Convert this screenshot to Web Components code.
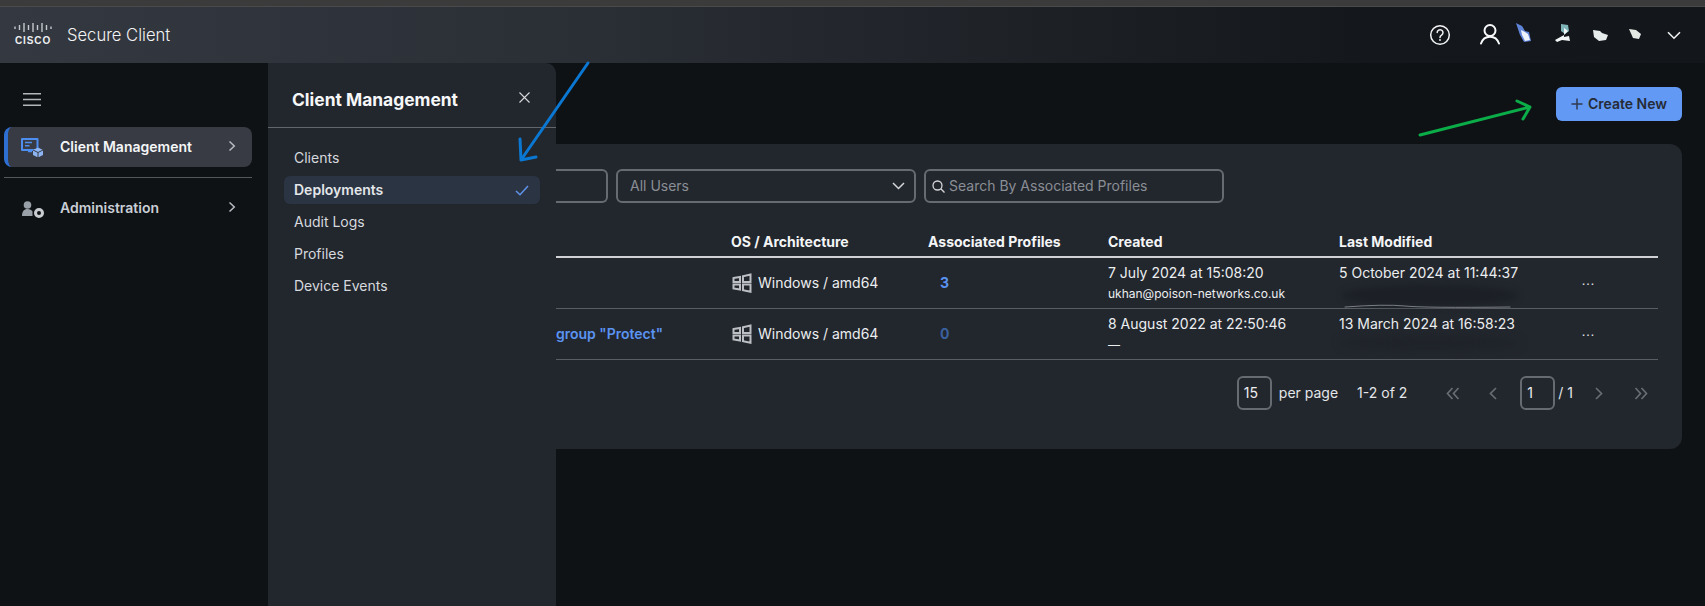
<!DOCTYPE html>
<html><head><meta charset="utf-8"><style>
html,body{margin:0;padding:0;background:#0f1215;}
body{font-family:Inter,"Liberation Sans",sans-serif;color:#fff;width:1705px;height:606px;overflow:hidden;}
</style></head><body>
<app-shell></app-shell>
<script>
function def(name,css,html){
  customElements.define(name,class extends HTMLElement{
    connectedCallback(){
      if(this.shadowRoot)return;
      const r=this.attachShadow({mode:'open'});
      r.innerHTML='<style>'+css+'</style>'+html;
    }
  });
}
const chevR='<svg width="8" height="12" viewBox="0 0 8 12" fill="none" stroke="currentColor" stroke-width="1.5"><path d="M1.5 1.5 6.3 6 1.5 10.5"/></svg>';
const winIcon='<svg width="20" height="20" viewBox="0 0 20 20" fill="none" stroke="#bcbfc4" stroke-width="2"><path d="M1.5 5 8 4V9H1.5ZM11 3.2 18.500 1.500V9H11ZM1.500 11.500H8V16.500L1.500 15.500ZM11 11.500H18.500V18.800L11 17.300Z"/></svg>';

def('cisco-logo',':host{display:block;width:38px;height:22px;margin-top:-2px}svg{display:block}span{display:block;font:700 10px/9px "Liberation Sans",sans-serif;letter-spacing:.9px;color:#eceef0;text-align:center;margin-top:4px}',
 '<svg width="38" height="9" viewBox="0 0 38 9" stroke="#c4c7cb" stroke-width="1.400"><path d="M1 3.500V6M5.500 2V7M10 0V9M14.500 2V7M19 0V9M23.500 2V7M28 0V9M32.500 2V7M37 3.500V6"/></svg><span>CISCO</span>');

def('top-bar',':host{display:flex;align-items:center;height:56px;background:linear-gradient(90deg,#343840 0,#2a2e35 35%,#14171b 80%,#13161a 100%);padding-left:14px;padding-right:24px;box-sizing:border-box}.t{font:300 16.600px/1 Inter,sans-serif;color:#f2f3f5;margin-left:15px}.sp{flex:1}.i{display:block}.h{margin-right:28px}.u{margin-right:13px;margin-top:-2px}.b{margin-right:6px}.c{margin-left:9px}',
 `<cisco-logo></cisco-logo><span class="t">Secure Client</span><span class="sp"></span>
 <svg class="i h" width="22" height="22" viewBox="0 0 22 22" fill="none" stroke="#f4f5f6" stroke-width="1.5"><circle cx="11" cy="11" r="9.300"/><path d="M8.200 8.600a2.900 2.900 0 1 1 4.400 2.500c-1 .6-1.600 1.100-1.600 2.300" stroke-linecap="round"/><circle cx="11" cy="16" r=".9" fill="#f4f5f6" stroke="none"/></svg>
 <svg class="i u" width="22" height="22" viewBox="0 0 22 22" fill="none" stroke="#f8f9fa" stroke-width="2" stroke-linecap="round"><circle cx="11" cy="7.500" r="5.500"/><path d="M2 20.500c1.500-4.500 4.700-6.800 9-6.800s7.500 2.300 9 6.800"/></svg>
 <svg class="i b" width="138" height="24" viewBox="0 0 138 24"><defs><filter id="f" x="-30%" y="-30%" width="160%" height="160%"><feGaussianBlur stdDeviation=".7"/></filter></defs><g filter="url(#f)"><path d="M2 0 8 3 11 8 15 9 17 18 10 19 6 12Z" fill="#5f84d8"/><path d="M7 7 11 9 14 11 16 17 11 18 8 12Z" fill="#eef4fb"/><path d="M47 1 54 2 55 8 51 11 47 8Z" fill="#7fb4b8"/><path d="M50 5 54 8 50 12 41 17 43 19 48 17 56 18 55 13 50 14Z" fill="#f2f6f6"/><path d="M79 7 86 8 88 10 94 12 92 17 85 18 80 14Z" fill="#e6ecec"/><path d="M115 6 122 7 127 11 125 16 119 15Z" fill="#e6eae4"/></g></svg>
 <svg class="i c" width="14" height="9" viewBox="0 0 14 9" fill="none" stroke="#f0f1f2" stroke-width="1.600"><path d="M1 1.200 7 7.200 13 1.200"/></svg>`);

def('nav-item',`:host{display:flex;align-items:center;height:40px;width:248px;box-sizing:border-box;border-radius:8px;padding:0 16px 0 17px;font:600 14px/1 Inter,sans-serif;color:#c9ced6}
:host([active]){background:#383b43;border-left:4px solid #2e6fd2;padding-left:13px;color:#f4f6f8}
.ic{width:23px;height:20px;margin-right:16px;display:block}.l{flex:1}.c{color:#b9bcc2;display:block}`,
 `<span class="ic"><slot name="icon"></slot></span><span class="l"><slot></slot></span><span class="c">${chevR}</span>`);

def('side-nav',':host{display:block;width:268px;height:543px;box-sizing:border-box;padding:30px 16px 0 4px;background:#0f1215}.m{display:block;margin:0 0 21px 19px}hr{border:0;border-top:1px solid #54575c;margin:10px 0 10px}',
 `<svg class="m" width="18" height="13" viewBox="0 0 18 13" stroke="#b4b6ba" stroke-width="1.400"><path d="M0 .8H18M0 6.500H18M0 12.200H18"/></svg>
 <slot name="a"></slot><hr><slot name="b"></slot>`);

def('sub-item',`:host{display:flex;align-items:center;height:28px;margin:0 16px 4px;padding:0 10px;border-radius:6px;font:400 14px/1 Inter,sans-serif;color:#d6d9de;justify-content:space-between}
:host([sel]){background:#2b3443;font-weight:600;color:#e4e7ea}svg{display:none}:host([sel]) svg{display:block;margin-right:1px}`,
 `<slot></slot><svg width="14" height="11" viewBox="0 0 14 11" fill="none" stroke="#5f93ea" stroke-width="1.500"><path d="M1 6 5 9.800 13 1"/></svg>`);

def('sub-panel',`:host{display:block;width:288px;height:543px;background:#22262d;border-top-right-radius:10px;position:relative;z-index:1;box-sizing:border-box}
.h{display:flex;align-items:center;justify-content:space-between;height:65px;padding:9px 27px 0 24px;border-bottom:1px solid #62656b;box-sizing:border-box}
.t{font:700 17.400px/1 Inter,sans-serif;color:#f6f7f8}.x{display:block;margin-top:-5px;margin-right:-1px}.l{padding-top:16px}`,
 `<div class="h"><span class="t"><slot name="title"></slot></span><svg class="x" width="11" height="11" viewBox="0 0 11 11" stroke="#d6d8dc" stroke-width="1.100"><path d="M.5 .5 10.500 10.500M10.500 .5 .5 10.500"/></svg></div><div class="l"><slot></slot></div>`);

def('primary-button',`:host{display:inline-flex;align-items:center;height:34px;width:126px;box-sizing:border-box;justify-content:center;gap:5px;background:#6299f4;border-radius:6px;color:#252b36;font:600 14px/1 Inter,sans-serif}`,
 `<svg width="12" height="12" viewBox="0 0 12 12" stroke="#2f3a4d" stroke-width="1.500"><path d="M6 .5V11.500M.5 6H11.500"/></svg><slot></slot>`);

def('filter-box',`:host{display:flex;align-items:center;height:34px;box-sizing:border-box;border:2px solid #666a71;border-radius:6px;color:#8a8e95;font:400 14px/1 Inter,sans-serif}
:host([cut]){border-left:0;border-top-left-radius:0;border-bottom-left-radius:0}`,
 `<slot></slot>`);

def('grid-row',`:host{display:grid;grid-template-columns:175px 197px 180px 231px 242px 77px;align-items:center;box-sizing:border-box;width:1102px;font:400 14px/1 Inter,sans-serif;color:#eceef0}
:host([head]){height:31px;border-bottom:2px solid #cfd1d5;font-weight:700;color:#f4f5f6;align-items:start;padding-top:8px}
:host([body]){height:51px;border-bottom:1px solid #5a5d63}`,
 `<slot></slot>`);

def('page-box',`:host{display:flex;align-items:center;height:34px;width:35px;box-sizing:border-box;border:2px solid #666a71;border-radius:6px;padding-left:5px;font:400 14px/1 Inter,sans-serif;color:#eceef0}`,`<slot></slot>`);

def('data-pager',`:host{display:flex;align-items:center;height:34px;margin-top:16px;width:1102px;padding-right:10px;box-sizing:border-box;justify-content:flex-end;font:400 14px/1 Inter,sans-serif;color:#e4e6e9}
svg{display:block}.pp{margin:0 19px 0 7px}.cnt{margin-right:39px}.a{margin-right:29px}.b{margin-right:23px}.t{margin:0 22px 0 3px}.d{margin-right:31px}`,
 `<page-box>15</page-box><span class="pp">per page</span><span class="cnt">1-2 of 2</span>
 <svg class="a" width="14" height="13" viewBox="0 0 14 13" fill="none" stroke="#686c73" stroke-width="1.700"><path d="M6.500 1 1.500 6.500 6.500 12M12.500 1 7.500 6.500 12.500 12"/></svg>
 <svg class="b" width="8" height="13" viewBox="0 0 8 13" fill="none" stroke="#686c73" stroke-width="1.700"><path d="M7 1 1.500 6.500 7 12"/></svg>
 <page-box>1</page-box><span class="t">/ 1</span>
 <svg class="d" width="8" height="13" viewBox="0 0 8 13" fill="none" stroke="#686c73" stroke-width="1.700"><path d="M1 1 6.500 6.500 1 12"/></svg>
 <svg width="14" height="13" viewBox="0 0 14 13" fill="none" stroke="#686c73" stroke-width="1.700"><path d="M1.500 1 6.500 6.500 1.500 12M7.500 1 12.500 6.500 7.500 12"/></svg>`);

def('os-cell',':host{display:flex;align-items:center;gap:6px;margin-left:1px}svg{display:block}',winIcon+'<slot></slot>');
def('date-cell',':host{display:block}.s{display:block;font-size:12px;margin-top:8px;min-height:12px;color:#eceef0}',
 `<slot></slot><span class="s"><slot name="by"></slot></span>`);
def('dots-cell',':host{display:block;font:400 14px/1 "Liberation Sans",sans-serif;letter-spacing:.3px;color:#e4e6e9;margin-top:-6px}','&#8230;');

def('data-card',`:host{display:block;width:1126px;height:305px;box-sizing:border-box;background:#22262d;border-radius:0 12px 12px 0;padding:25px 24px 0 0}
.f{display:flex;gap:8px;margin-bottom:24px}`,
 `<div class="f"><slot name="filters"></slot></div><slot></slot>`);

def('app-shell',`:host{display:block;width:1705px;height:606px;position:relative;overflow:hidden}
.strip{height:7px;background:#3b3b3b;border-bottom:1px solid #4a4a4a;box-sizing:border-box}
.row{display:flex}.main{flex:1;display:flex;flex-direction:column;align-items:flex-start}
.act{width:1126px;display:flex;justify-content:flex-end;padding-top:24px;margin-bottom:23px}
.arrows{position:absolute;left:0;top:0;pointer-events:none;z-index:5}
.smear{position:absolute;z-index:2;border-radius:50%}`,
 `<div class="strip"></div><top-bar></top-bar>
 <div class="row">
  <side-nav>
   <nav-item slot="a" active><svg slot="icon" width="23" height="20" viewBox="0 0 23 20" fill="none"><path d="M1 2H16.500V13H1Z" stroke="#4d8ef0" stroke-width="2" stroke-linejoin="round"/><path d="M4 5.500H11M4 8.800H8.500M7 14.500H11" stroke="#4d8ef0" stroke-width="1.600"/><path d="M17 10.500 22 13V18L17 20.500 12 18V13Z" fill="#8db4f2"/><path d="M12 13 17 15.500 22 13M17 15.500V20.500" stroke="#383b43" stroke-width="1"/></svg>Client Management</nav-item>
   <nav-item slot="b"><svg slot="icon" width="23" height="20" viewBox="0 0 23 20"><circle cx="6.500" cy="7" r="3.800" fill="#9aa0a8"/><path d="M1 18C1 13.500 3 11 6.500 11 9 11 10.500 12 11.500 13.500V18Z" fill="#9aa0a8"/><circle cx="18" cy="15" r="3.500" fill="none" stroke="#c9ccd1" stroke-width="3"/></svg>Administration</nav-item>
  </side-nav>
  <sub-panel>
   <span slot="title">Client Management</span>
   <sub-item>Clients</sub-item><sub-item sel>Deployments</sub-item><sub-item>Audit Logs</sub-item><sub-item>Profiles</sub-item><sub-item>Device Events</sub-item>
  </sub-panel>
  <div class="main">
   <div class="act"><primary-button>Create New</primary-button></div>
   <data-card>
    <filter-box slot="filters" cut style="width:52px"></filter-box>
    <filter-box slot="filters" style="width:300px;padding:0 9px 0 12px;justify-content:space-between"><span>All Users</span><svg width="13" height="8" viewBox="0 0 13 8" fill="none" stroke="#d5d7da" stroke-width="1.500"><path d="M1 1 6.500 6.500 12 1"/></svg></filter-box>
    <filter-box slot="filters" style="width:300px;padding-left:6px;gap:4px"><svg width="13" height="13" viewBox="0 0 13 13" fill="none" stroke="#d5d7da" stroke-width="1.300"><circle cx="5.500" cy="5.500" r="4.500"/><path d="M8.800 8.800 12.500 12.500"/></svg><span>Search By Associated Profiles</span></filter-box>
    <grid-row head><span></span><span>OS / Architecture</span><span>Associated Profiles</span><span>Created</span><span>Last Modified</span><span></span></grid-row>
    <grid-row body><span></span><os-cell>Windows / amd64</os-cell><span style="padding-left:12px;color:#5b93f2;font-weight:700">3</span><date-cell>7 July 2024 at 15:08:20<span slot="by">ukhan@poison-networks.co.uk</span></date-cell><date-cell>5 October 2024 at 11:44:37</date-cell><dots-cell></dots-cell></grid-row>
    <grid-row body><span style="color:#5b93f2;font-weight:600">group "Protect"</span><os-cell>Windows / amd64</os-cell><span style="padding-left:12px;color:#3a609f;font-weight:700">0</span><date-cell>8 August 2022 at 22:50:46<span slot="by">—</span></date-cell><date-cell>13 March 2024 at 16:58:23</date-cell><dots-cell></dots-cell></grid-row>
    <data-pager></data-pager>
   </data-card>
  </div>
 </div>
 <div class="smear" style="left:1342px;top:285px;width:176px;height:21px;background:#1c2026;filter:blur(3px)"></div>
 <div class="smear" style="left:1340px;top:336px;width:180px;height:14px;background:#1f2329;filter:blur(4px)"></div>
 <svg class="arrows" width="1705" height="606" viewBox="0 0 1705 606" fill="none" stroke-linecap="round" stroke-linejoin="round">
  <path d="M1345 307Q1385 304 1405 306T1510 307" stroke="#7a7e84" stroke-width="1" style="filter:blur(.6px)"/>
  <path d="M588 63 521 160M520 139 521 160 536 157" stroke="#0a78d2" stroke-width="3"/>
  <path d="M1420 135 1530 107M1517 101 1530 107 1523 119" stroke="#0aad48" stroke-width="3"/>
 </svg>`);
</script></body></html>
